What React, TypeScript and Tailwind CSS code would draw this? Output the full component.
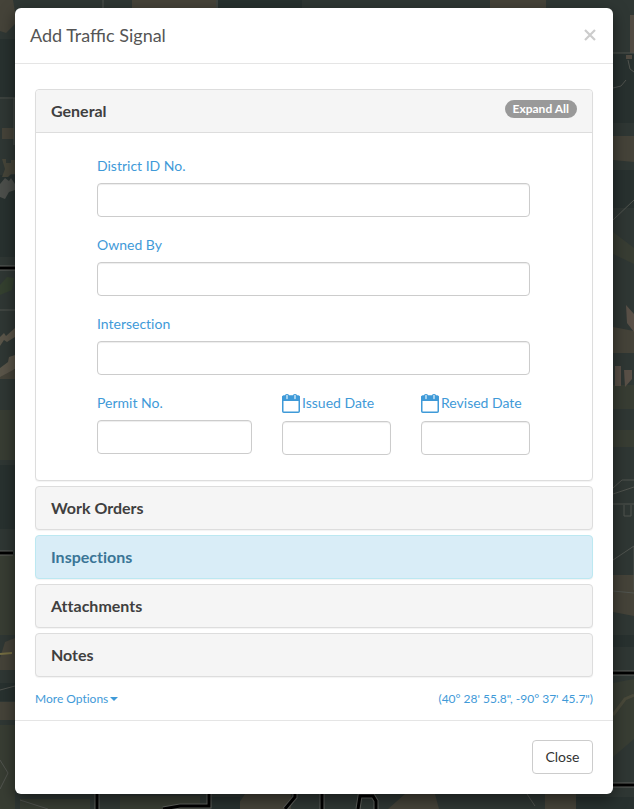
import { useState } from 'react'
import type { ReactNode } from 'react'

const fieldClass =
  'block h-[34px] w-full rounded border border-[#ccc] bg-white px-3 text-sm text-[#555] shadow-[inset_0_1px_1px_rgba(0,0,0,0.075)] outline-none focus:border-[#66afe9]'

function CalendarIcon() {
  return (
    <svg viewBox="0 0 18 20" className="h-5 w-[18px] shrink-0" aria-hidden="true">
      <rect x="0.75" y="3.25" width="16.5" height="16" rx="1" fill="none" stroke="#3f9ad8" strokeWidth="1.5" />
      <path d="M0 4a1.500 1.500 0 0 1 1.500-1.500h15A1.500 1.500 0 0 1 18 4v4H0z" fill="#3f9ad8" />
      <rect x="3" y="1" width="4" height="6" rx="1.500" fill="#3f9ad8" />
      <rect x="11" y="1" width="4" height="6" rx="1.500" fill="#3f9ad8" />
      <path d="M5 2.500v3M13 2.500v3" stroke="#d3e9f7" strokeWidth="1.400" strokeLinecap="round" />
    </svg>
  )
}

function Field({ id, label, icon }: { id: string; label: string; icon?: ReactNode }) {
  return (
    <div>
      <label htmlFor={id} className={icon ? 'mb-2 flex h-5 items-center gap-[2px]' : 'mb-[7px] block h-5'}>
        {icon}
        {label}
      </label>
      <input id={id} type="text" className={fieldClass} />
    </div>
  )
}

function MapBackdrop() {
  return (
    <svg
      viewBox="0 0 634 809"
      preserveAspectRatio="xMidYMid slice"
      className="absolute inset-0 -z-10 h-full w-full"
      aria-hidden="true"
    >
      <rect width="634" height="809" fill="#2f3734" />

      {/* farmland */}
      <g fill="#454339">
        <path d="M0 0h13l2 12v12l-9 9-6-2z" />
        <path d="M132 0h84v8h-84zM490 0h56v8h-56z" />
        <path d="M2 128h12v11H2zM0 370h15v9H0zM5 642l10-4v32H0v-12z" />
        <path d="M613 136h21v26l-21-2zM613 327l21 4v22h-21z" />
        <path d="M0 702h15v18H0zM613 575h21v41l-21-4z" />
        <path d="M245 794h46v15h-56zM405 794h30l4 15h-51zM545 794h31v15h-31z" />
      </g>
      <g fill="#383d33">
        <path d="M0 410h15v50H0zM0 555h15v80H0zM0 725h15v84H0z" />
        <path d="M613 430h21v17h-21zM613 385h21v24h-21zM613 232l21 16v16l-21-10z" />
        <path d="M613 683l21-4v60l-21 18z" />
        <path d="M20 799h70v10H20zM120 796h80v13h-80z" />
      </g>
      <g fill="#28312f">
        <path d="M0 39h15v60H0zM0 175h15v82H0zM0 465h15v64H0zM0 683h15v18H0z" />
        <path d="M613 53h21v70h-21zM613 170h21v38h-21zM613 635h21v12h-21z" />
        <path d="M210 797h30v12h-30zM576 797h58v12h-58zM218 0h84v8h-84z" />
      </g>
      <path d="M0 285l7-8 7 1-2 12-12 5z" fill="#34402f" />
      <path d="M630 15h4v38h-4zM626 55h6v4h-6z" fill="#514b42" />
      <path d="M0 337l4-4 2 3 9-8v9l-8 5-3-2-4 6zM0 377v-9l8-6 1-5 6-2v14z" fill="#5a5549" />
      <path d="M2 159h4v4h5v-3h4v14h-4l-3 3H2l3-8z" fill="#464539" />
      <path d="M0 184l5-6 4 3 2-3 4 6v6l-6 2-4 7-5-2z" fill="#4c4f4b" />
      <path d="M626 305l8 9v18l-7-9zM615 366h6v20h-6zM624 370h8v9l-7 8z" fill="#595047" />
      <path d="M613 715l12-16 9-4" fill="none" stroke="#49493a" strokeWidth="3" />
      <path d="M0 654l12-1" stroke="#746d42" strokeWidth="2" />

      {/* streams and lanes */}
      <g fill="none" stroke="#51544f">
        <path d="M0 98h15M14 98v47M0 310h15M0 690l15-4" />
        <path d="M613 53h21M628 60l2 9 4 3M613 88l8-2 5-6M613 220l21-20" />
        <path d="M613 488l9-8h12M613 494l21-7M613 504h21M624 505v11h7v-11M613 560l21-14v44" />
        <path d="M613 591l21 2M0 760l8 13-8 16M20 800l28 9M103 0v8M217 0v8M527 794l8 12" />
      </g>

      {/* county roads */}
      <g fill="none" stroke="#5e605c" strokeWidth="5">
        <path d="M0 268h15M0 553h13M613 673h21M613 785h21M97 794v15M163 809l17-3h29v-12M295 794v3l-10 12M322 794v15M358 809l2-13h13l3 5v8" />
      </g>
      <g fill="none" stroke="#000" strokeWidth="3">
        <path d="M0 268h15M0 553h13M613 673h21M613 785h21M97 794v15M163 809l17-3h29v-12M295 794v3l-10 12M322 794v15M358 809l2-13h13l3 5v8" />
      </g>
    </svg>
  )
}

function Panel({ title, info = false }: { title: string; info?: boolean }) {
  return (
    <section
      className={
        info
          ? 'rounded border border-[#bce8f1] bg-[#d9edf7] text-[#3a7596] shadow-[0_1px_1px_rgba(0,0,0,0.05)]'
          : 'rounded border border-[#ddd] bg-[#f5f5f5] text-[#3f3f3f] shadow-[0_1px_1px_rgba(0,0,0,0.05)]'
      }
    >
      <h4 className="text-base font-bold">
        <button type="button" className="block h-[42px] w-full px-[15px] text-left">
          {title}
        </button>
      </h4>
    </section>
  )
}

export default function App() {
  const [open, setOpen] = useState(true)

  return (
    <div className="relative isolate min-h-screen overflow-hidden bg-[#2f3734] pt-2 pr-[21px] pb-[15px] pl-[15px] font-['Lato',sans-serif] text-sm text-[#3f9ad8] [font-variant-ligatures:none]">
      <MapBackdrop />

      {open && (
        <div
          role="dialog"
          aria-labelledby="dialog-title"
          className="rounded-md bg-white shadow-[0_5px_15px_rgba(0,0,0,0.5)]"
        >
          <header className="flex h-14 items-center justify-between border-b border-[#e5e5e5] px-[15px] pb-[2px]">
            <h3 id="dialog-title" className="text-lg text-[#555] [font-variant-ligatures:normal]">
              Add Traffic Signal
            </h3>
            <button type="button" aria-label="Close dialog" onClick={() => setOpen(false)}>
              <svg viewBox="0 0 16 16" className="h-4 w-4" aria-hidden="true">
                <path d="M3 3l10 10M13 3L3 13" stroke="#ccc" strokeWidth="2.200" />
              </svg>
            </button>
          </header>

          <div className="px-5 pt-[25px] pb-[11px]">
            <div className="flex flex-col gap-[5px]">
              <section className="rounded border border-[#ddd] bg-white shadow-[0_1px_1px_rgba(0,0,0,0.05)]">
                <div className="flex h-[43px] items-start justify-between rounded-t border-b border-[#ddd] bg-[#f5f5f5] px-[15px]">
                  <h4 className="text-base leading-[42px] font-bold text-[#3f3f3f]">General</h4>
                  <button
                    type="button"
                    className="mt-[10px] h-[18px] rounded-full bg-[#999] px-2 text-xs leading-[18px] font-bold text-white"
                  >
                    Expand All
                  </button>
                </div>

                <form className="flex flex-col gap-[18px] pt-[23px] pr-[62px] pb-[25px] pl-[61px]">
                  <Field id="district" label="District ID No." />
                  <Field id="owner" label="Owned By" />
                  <Field id="intersection" label="Intersection" />
                  <div className="grid grid-cols-[155fr_109fr_109fr] gap-[30px]">
                    <Field id="permit" label="Permit No." />
                    <Field id="issued" label="Issued Date" icon={<CalendarIcon />} />
                    <Field id="revised" label="Revised Date" icon={<CalendarIcon />} />
                  </div>
                </form>
              </section>

              <Panel title="Work Orders" />
              <Panel title="Inspections" info />
              <Panel title="Attachments" />
              <Panel title="Notes" />
            </div>

            <div className="mt-3 flex h-5 items-center justify-between text-xs">
              <button type="button" className="flex items-center gap-[2px]">
                More Options
                <svg viewBox="0 0 8 4" className="h-1 w-2" aria-hidden="true">
                  <path d="M0 0h8L4 4z" fill="currentColor" />
                </svg>
              </button>
              <a href="#map">(40° 28' 55.8", -90° 37' 45.7")</a>
            </div>
          </div>

          <footer className="flex justify-end border-t border-[#e5e5e5] px-5 pt-[19px] pb-5">
            <button
              type="button"
              onClick={() => setOpen(false)}
              className="h-[34px] w-[61px] rounded border border-[#ccc] bg-white text-sm text-[#333]"
            >
              Close
            </button>
          </footer>
        </div>
      )}
    </div>
  )
}
